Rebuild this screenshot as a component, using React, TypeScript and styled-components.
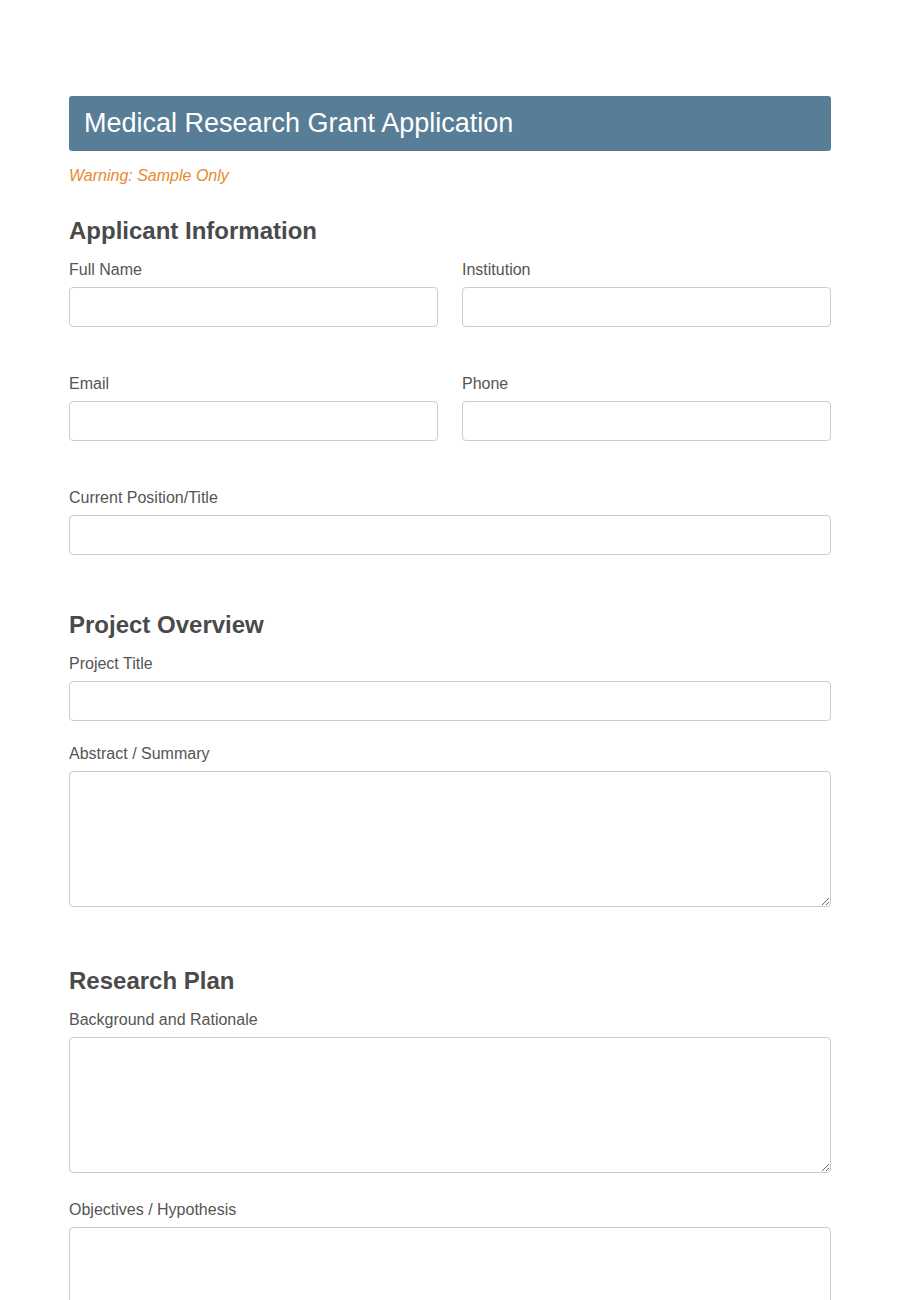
import React from "react";
import styled, { createGlobalStyle } from "styled-components";

const Global = createGlobalStyle`
  html, body { margin: 0; padding: 0; background: #fff; }
  body { font-family: "Liberation Sans", Arial, sans-serif; color: #555; }
  * { box-sizing: border-box; }
`;

const Page = styled.div`
  width: 762px;
  margin: 96px auto 0;
`;

const Header = styled.div`
  background: #587d97;
  border-radius: 3px;
  height: 55px;
  display: flex;
  align-items: center;
  padding: 0 15px;
`;

const Title = styled.h1`
  margin: 0 0 1px;
  font-size: 27px;
  font-weight: normal;
  color: #fff;
  line-height: 32px;
`;

const Warning = styled.p`
  margin: 16px 0 0;
  font-size: 16px;
  line-height: 18px;
  font-style: italic;
  color: #e8892f;
`;

const Section = styled.section<{ $top: number }>`
  margin-top: ${(p) => p.$top}px;
`;

const SectionTitle = styled.h2`
  margin: 0 0 15px;
  font-size: 24px;
  line-height: 28px;
  font-weight: bold;
  color: #4a4a4a;
`;

const Row = styled.div<{ $cols: number; $gap: number }>`
  display: grid;
  grid-template-columns: repeat(${(p) => p.$cols}, 1fr);
  column-gap: 24px;
  margin-bottom: ${(p) => p.$gap}px;
`;

const Field = styled.div`
  display: flex;
  flex-direction: column;
`;

const Label = styled.label`
  display: block;
  font-size: 16px;
  line-height: 18px;
  padding-top: 1px;
  color: #555;
  margin-bottom: 8px;
`;

const Input = styled.input`
  display: block;
  width: 100%;
  height: 40px;
  border: 1px solid #ccc;
  border-radius: 4px;
  padding: 0 10px;
  font-family: inherit;
  font-size: 16px;
  outline: none;
`;

const TextArea = styled.textarea`
  display: block;
  width: 100%;
  height: 136px;
  border: 1px solid #ccc;
  border-radius: 4px;
  padding: 10px;
  font-family: inherit;
  font-size: 16px;
  outline: none;
`;

export default function App() {
  return (
    <>
      <Global />
      <Page>
        <Header>
          <Title>Medical Research Grant Application</Title>
        </Header>
        <Warning>Warning: Sample Only</Warning>

        <Section $top={32}>
          <SectionTitle>Applicant Information</SectionTitle>
          <Row $cols={2} $gap={47}>
            <Field>
              <Label>Full Name</Label>
              <Input type="text" />
            </Field>
            <Field>
              <Label>Institution</Label>
              <Input type="text" />
            </Field>
          </Row>
          <Row $cols={2} $gap={47}>
            <Field>
              <Label>Email</Label>
              <Input type="email" />
            </Field>
            <Field>
              <Label>Phone</Label>
              <Input type="tel" />
            </Field>
          </Row>
          <Row $cols={1} $gap={0}>
            <Field>
              <Label>Current Position/Title</Label>
              <Input type="text" />
            </Field>
          </Row>
        </Section>

        <Section $top={56}>
          <SectionTitle>Project Overview</SectionTitle>
          <Row $cols={1} $gap={23}>
            <Field>
              <Label>Project Title</Label>
              <Input type="text" />
            </Field>
          </Row>
          <Row $cols={1} $gap={0}>
            <Field>
              <Label>Abstract / Summary</Label>
              <TextArea />
            </Field>
          </Row>
        </Section>

        <Section $top={60}>
          <SectionTitle>Research Plan</SectionTitle>
          <Row $cols={1} $gap={27}>
            <Field>
              <Label>Background and Rationale</Label>
              <TextArea />
            </Field>
          </Row>
          <Row $cols={1} $gap={27}>
            <Field>
              <Label>Objectives / Hypothesis</Label>
              <TextArea />
            </Field>
          </Row>
        </Section>
      </Page>
    </>
  );
}
